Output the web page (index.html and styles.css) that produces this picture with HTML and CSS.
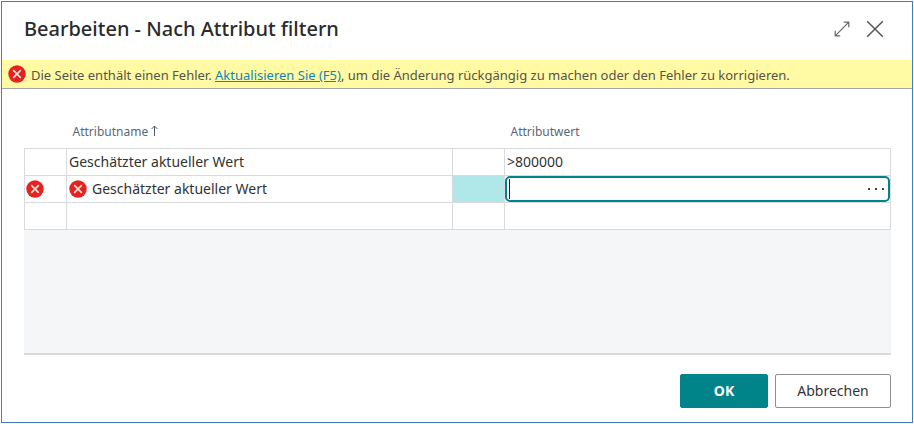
FILE: index.html
```
<!DOCTYPE html>
<html lang="de">
<head>
<meta charset="utf-8">
<title>Bearbeiten - Nach Attribut filtern</title>
<link rel="stylesheet" href="styles.css">
</head>
<body>
<svg class="symbols" aria-hidden="true">
  <symbol id="error" viewBox="0 0 18 18">
    <circle cx="9" cy="9" r="8.7" fill="#e3231f"/>
    <path d="M5.2 5.2l7.6 7.6M12.8 5.2l-7.6 7.6" stroke="#fbdcd8" stroke-width="1.7" fill="none"/>
  </symbol>
</svg>
<main class="dialog">
  <header class="dialog-header">
    <h1>Bearbeiten - Nach Attribut filtern</h1>
    <div class="window-actions">
      <button class="icon-button" type="button" aria-label="Maximieren">
        <svg width="16" height="16" viewBox="0 0 16 16"><path d="M1.2 14.8L14.8 1.2M9.8 1.2h5v5M1.2 9.8v5h5" fill="none" stroke="#666" stroke-width="1.2"/></svg>
      </button>
      <button class="icon-button" type="button" aria-label="Schließen">
        <svg width="18" height="18" viewBox="0 0 18 18"><path d="M1.2 1.2l15.6 15.6M16.8 1.2L1.2 16.8" fill="none" stroke="#555" stroke-width="1.5"/></svg>
      </button>
    </div>
  </header>
  <div class="message" role="alert">
    <svg class="error-icon"><use href="#error"/></svg>
    <p>Die Seite enthält einen Fehler. <a href="#">Aktualisieren Sie (F5)</a>, um die Änderung rückgängig zu machen oder den Fehler zu korrigieren.</p>
  </div>
  <section class="list">
    <table>
      <colgroup><col class="col-marker"><col><col class="col-menu"><col></colgroup>
      <thead>
        <tr>
          <th></th>
          <th scope="col">Attributname <svg class="sort" width="7" height="11" viewBox="0 0 7 11"><path d="M3.5 11V1M.6 4l2.9-3 2.9 3" fill="none" stroke="#505c6d"/></svg></th>
          <th></th>
          <th scope="col" id="value-heading">Attributwert</th>
        </tr>
      </thead>
      <tbody>
        <tr><td></td><td>Geschätzter aktueller Wert</td><td></td><td>&gt;800000</td></tr>
        <tr>
          <td class="marker"><svg class="error-icon"><use href="#error"/></svg></td>
          <td><div class="error-cell"><svg class="error-icon"><use href="#error"/></svg>Geschätzter aktueller Wert</div></td>
          <td class="selected"></td>
          <td class="edit-cell">
            <div class="editor">
              <span class="caret"></span>
              <input type="text" aria-labelledby="value-heading">
              <button class="lookup" type="button" aria-label="Wert auswählen"><svg width="16" height="4" viewBox="0 0 16 4"><path d="M0 1h2v2H0zM7 1h2v2H7zM14 1h2v2h-2z" fill="#444"/></svg></button>
            </div>
          </td>
        </tr>
        <tr><td></td><td></td><td></td><td></td></tr>
      </tbody>
    </table>
    <div class="list-space"></div>
  </section>
  <footer class="dialog-footer">
    <button class="button primary" type="button">OK</button>
    <button class="button" type="button">Abbrechen</button>
  </footer>
</main>
</body>
</html>
```
FILE: styles.css
```
* { box-sizing: border-box; }

body {
  margin: 0;
  padding: 1px;
  background: #fff;
  color: #333;
  font: 13px/18px "Noto Sans", sans-serif;
}

.symbols {
  position: absolute;
  width: 0;
  height: 0;
}

.dialog {
  min-height: calc(100vh - 2px);
  display: flex;
  flex-direction: column;
  border: 1px solid #3c80c3;
}

.dialog-header {
  display: flex;
  align-items: center;
  justify-content: space-between;
  height: 58px;
  padding: 0 28px 4px 22px;
}

h1 {
  margin: 0;
  color: #2b2b2b;
  font-size: 20px;
  font-weight: 500;
  line-height: 28px;
}

.window-actions {
  display: flex;
  align-items: center;
  gap: 16px;
}

.icon-button, .lookup {
  display: flex;
  padding: 0;
  border: 0;
  background: none;
}

.message {
  display: flex;
  align-items: center;
  gap: 5px;
  height: 29px;
  padding: 0 6px;
  border-bottom: 1px solid #a5a5a5;
  background: #fffaa3;
  color: #55554a;
}

.message p {
  margin: 0;
  padding-top: 2px;
}

.message a { color: #1583b9; }

.error-icon {
  flex: none;
  display: block;
  width: 18px;
  height: 18px;
}

.list {
  flex: 1;
  display: flex;
  flex-direction: column;
  margin: 30px 21px 0 22px;
  border-bottom: 2px solid #d9d9d9;
}

table {
  width: 100%;
  table-layout: fixed;
  border-collapse: collapse;
}

.col-marker { width: 42px; }

.col-menu { width: 52px; }

th {
  height: 29px;
  padding: 0 6px 2px;
  color: #5b6675;
  font-size: 12px;
  font-weight: 400;
  text-align: left;
}

td {
  height: 27px;
  padding: 0 2px;
  border: 1px solid #d8dade;
  font-size: 14px;
}

.marker { padding: 0 1px; }

.error-cell {
  display: flex;
  align-items: center;
  gap: 5px;
}

.selected { background: #b0e8ea; }

.edit-cell { padding: 0; }

.editor {
  display: flex;
  align-items: center;
  height: 26px;
  padding: 0 4px 0 2px;
  border: 2px solid #008489;
  border-radius: 5px;
}

.caret {
  width: 1px;
  height: 20px;
  background: #222;
}

.editor input {
  flex: 1;
  min-width: 0;
  height: 20px;
  padding: 0;
  border: 0;
  outline: 0;
  background: none;
  color: inherit;
  font: inherit;
}

.list-space {
  flex: 1;
  background: #f5f6f8;
}

.dialog-footer {
  display: flex;
  justify-content: flex-end;
  gap: 7px;
  padding: 19px 21px 14px;
}

.button {
  min-width: 116px;
  height: 34px;
  padding: 0 20px;
  border: 1px solid #8f8f8f;
  border-radius: 2px;
  background: #fff;
  color: #333;
  font: 14px/20px "Noto Sans", sans-serif;
}

.primary {
  min-width: 88px;
  border-color: #008489;
  background: #008489;
  color: #fff;
  font-weight: 700;
}
```
